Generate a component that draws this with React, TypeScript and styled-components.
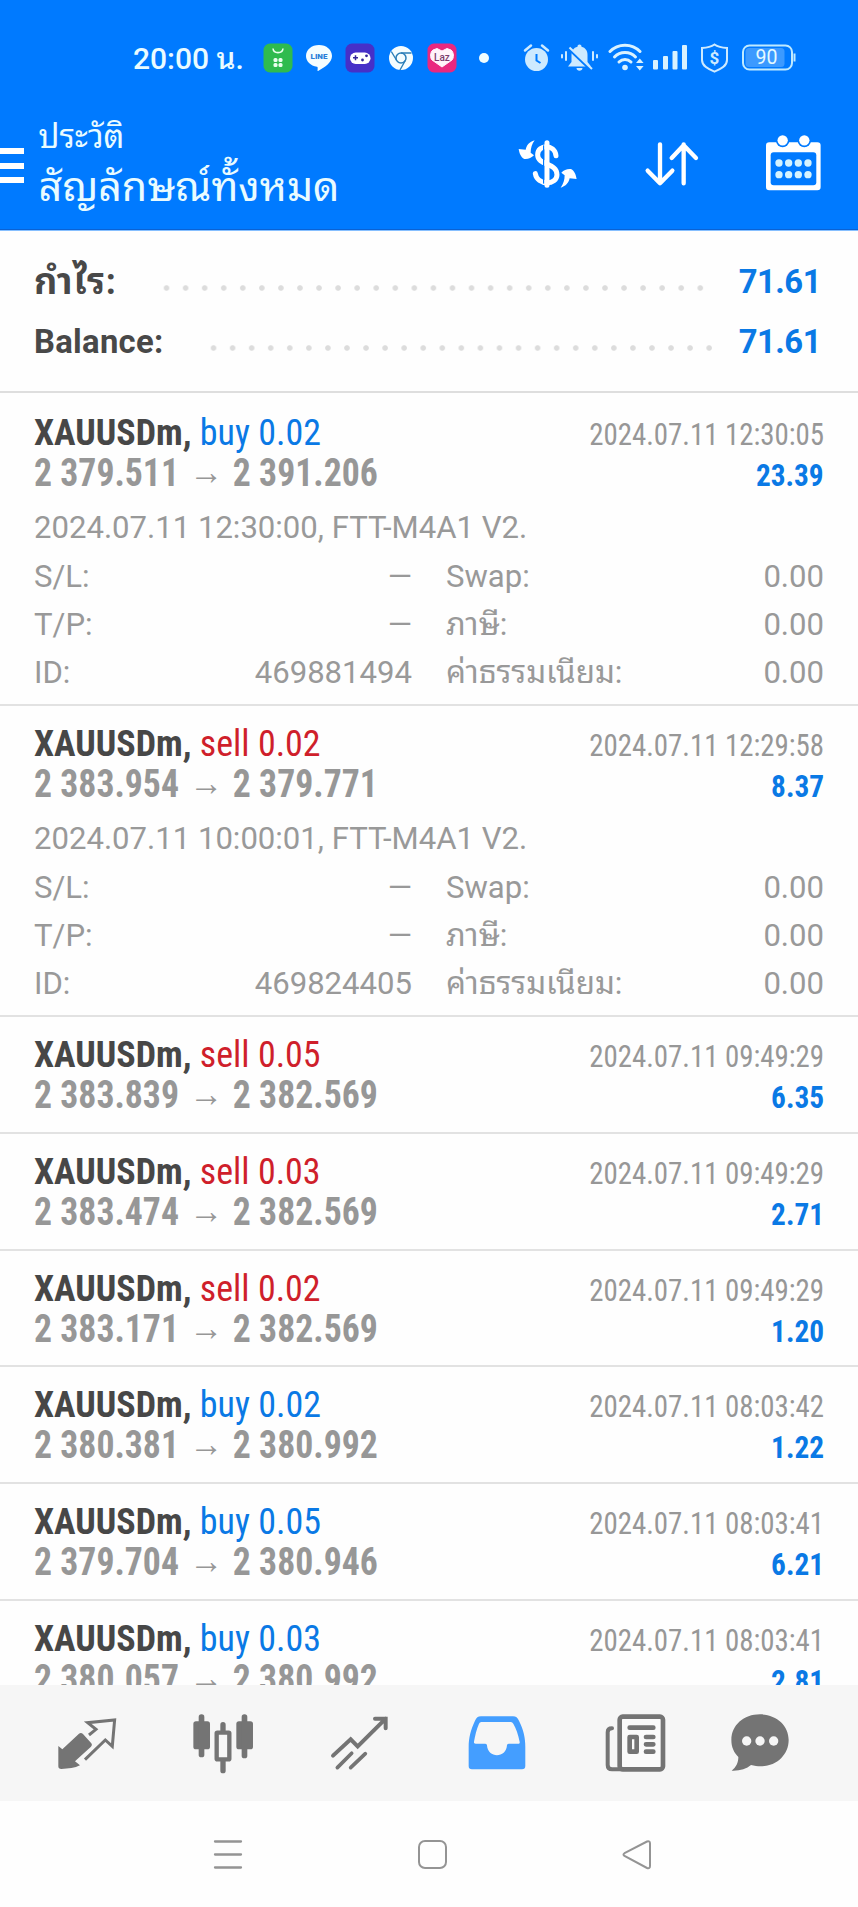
import React from "react";
import styled, { createGlobalStyle } from "styled-components";

const BLUE = "#007aff";
const BUY = "#0a79e5";

const Global = createGlobalStyle`
  body { margin: 0; background: #fefefe; }
  * { box-sizing: border-box; }
  svg { display: block; flex: none; }
`;

const Screen = styled.div`
  width: 858px;
  height: 1907px;
  display: flex;
  flex-direction: column;
  overflow: hidden;
  background: #fefefe;
  color: #979797;
  font-family: Roboto, "Noto Sans Thai Looped", "Noto Looped Thai", Loma, Garuda, Waree, "Noto Sans Thai", sans-serif;
`;

const Header = styled.header`
  height: 230px;
  flex: none;
  background: ${BLUE};
  border-bottom: 1px solid #0a62d4;
  color: #e9fbff;
`;

const StatusBar = styled.div`
  height: 114px;
  padding: 1px 0 0 133px;
  display: flex;
  align-items: center;
`;

const Clock = styled.div`
  width: 129.5px;
  padding-top: 3px;
  font-size: 30px;
  font-weight: 500;
  line-height: 40px;
  white-space: nowrap;
`;

const Icon = styled.svg<{ $left?: number }>`
  margin-left: ${(p) => p.$left ?? 0}px;
`;

const TitleBar = styled.div`
  height: 115px;
  display: flex;
  align-items: flex-start;
`;

const Burger = styled.div`
  width: 24px;
  height: 35px;
  margin-top: 34px;
  border-top: 6px solid #fff;
  border-bottom: 6px solid #fff;
  display: flex;
  align-items: center;
  &::before {
    content: "";
    height: 6px;
    flex: 1;
    background: #fff;
  }
`;

const Titles = styled.div`
  width: 477px;
  padding: 4px 0 0 14.5px;
  white-space: nowrap;
`;

const Small = styled.div`
  font-size: 32.5px;
  line-height: 39px;
`;

const Big = styled.div`
  font-size: 41.2px;
  line-height: 61px;
`;

const Tools = styled.div`
  display: flex;
  align-items: flex-start;
  padding-top: 18px;
`;

const Summary = styled.section`
  height: 163px;
  flex: none;
  padding: 21px 37px 0 34px;
  border-top: 1px solid #86bfff;
  border-bottom: 2px solid #dedede;
  color: #484848;
  font-size: 32.8px;
  font-weight: 700;
  line-height: 60px;
`;

const SummaryRow = styled.div`
  display: flex;
  height: 60px;
  justify-content: space-between;
`;

const SummaryLabel = styled.span<{ $width: number; $thai?: boolean }>`
  width: ${(p) => p.$width}px;
  font-size: ${(p) => (p.$thai ? 36 : 32.8)}px;
  letter-spacing: ${(p) => (p.$thai ? 0.8 : 0.3)}px;
  white-space: nowrap;
`;

const Dots = styled.span<{ $count: number }>`
  width: ${(p) => p.$count * 19.07}px;
  height: 8px;
  margin-top: 32px;
  background: radial-gradient(circle at center, #dcdcdc 2.3px, transparent 3.2px) 0 0 / 19.07px 8px repeat-x;
`;

const Value = styled.span`
  flex: 1;
  text-align: right;
  color: ${BUY};
  letter-spacing: -0.5px;
`;

const List = styled.main`
  flex: 1;
  min-height: 0;
  overflow: hidden;
  padding-top: 2px;
`;

const Card = styled.article<{ $open: boolean }>`
  height: ${(p) => (p.$open ? 311 : 116.8)}px;
  padding: 17px 34px 0;
  border-bottom: 2px solid #e2e2e2;
`;

const Line = styled.div`
  display: flex;
  height: 41px;
  line-height: 40px;
  justify-content: space-between;
  align-items: baseline;
  white-space: pre;
  font-stretch: 75%;
`;

const Title = styled.div`
  font-size: 37.5px;
  transform: scaleX(0.959);
  transform-origin: 0 0;
`;

const Symbol = styled.span`
  font-weight: 700;
  color: #474747;
`;

const Side = styled.span<{ $sell: boolean }>`
  color: ${(p) => (p.$sell ? "#cf1f2b" : BUY)};
`;

const Prices = styled.div`
  display: flex;
  align-items: baseline;
  font-size: 38px;
  font-weight: 700;
  transform: scaleX(0.94);
  transform-origin: 0 0;
`;

const FromPrice = styled.span`
  width: 154.5px;
`;

const Arrow = styled.span`
  position: relative;
  top: -2px;
  width: 36px;
  margin: 0 10px 0 11px;
  font-family: "Liberation Sans", sans-serif;
  font-size: 36px;
  font-weight: 400;
  line-height: 30px;
  text-align: center;
`;

const Time = styled.div`
  font-size: 30.5px;
  transform: scaleX(0.947);
  transform-origin: 100% 0;
`;

const Profit = styled.div`
  font-size: 31px;
  font-weight: 700;
  color: ${BUY};
  transform: scaleX(0.945);
  transform-origin: 100% 0;
`;

const Details = styled.div`
  padding-top: 10.3px;
  font-size: 31.1px;
  font-weight: 400;
  line-height: 48.3px;
  color: #999;
  white-space: nowrap;
`;

const DetailGrid = styled.div`
  display: grid;
  grid-template-columns: 378px 378px;
  column-gap: 34px;
`;

const Pair = styled.div`
  height: 48.3px;
  display: flex;
  justify-content: space-between;
`;

const ThaiLabel = styled.span`
  font-size: 31.4px;
`;

const Nav = styled.nav`
  height: 116px;
  flex: none;
  display: flex;
  padding: 27px 0 0 56px;
  background: #f6f6f6;
  color: #747474;
`;

const SystemBar = styled.footer`
  height: 106px;
  flex: none;
  display: flex;
  padding: 36px 0 0 212px;
`;

type Deal = {
  side: "buy" | "sell";
  lots: string;
  from: string;
  to: string;
  time: string;
  profit: string;
  opened?: string;
  id?: string;
};

const deals: Deal[] = [
  { side: "buy", lots: "0.02", from: "2 379.511", to: "2 391.206", time: "2024.07.11 12:30:05", profit: "23.39", opened: "2024.07.11 12:30:00, FTT-M4A1 V2.", id: "469881494" },
  { side: "sell", lots: "0.02", from: "2 383.954", to: "2 379.771", time: "2024.07.11 12:29:58", profit: "8.37", opened: "2024.07.11 10:00:01, FTT-M4A1 V2.", id: "469824405" },
  { side: "sell", lots: "0.05", from: "2 383.839", to: "2 382.569", time: "2024.07.11 09:49:29", profit: "6.35" },
  { side: "sell", lots: "0.03", from: "2 383.474", to: "2 382.569", time: "2024.07.11 09:49:29", profit: "2.71" },
  { side: "sell", lots: "0.02", from: "2 383.171", to: "2 382.569", time: "2024.07.11 09:49:29", profit: "1.20" },
  { side: "buy", lots: "0.02", from: "2 380.381", to: "2 380.992", time: "2024.07.11 08:03:42", profit: "1.22" },
  { side: "buy", lots: "0.05", from: "2 379.704", to: "2 380.946", time: "2024.07.11 08:03:41", profit: "6.21" },
  { side: "buy", lots: "0.03", from: "2 380.057", to: "2 380.992", time: "2024.07.11 08:03:41", profit: "2.81" },
];

function DealCard({ deal }: { deal: Deal }) {
  return (
    <Card $open={!!deal.id}>
      <Line>
        <Title>
          <Symbol>XAUUSDm, </Symbol>
          <Side $sell={deal.side === "sell"}>{deal.side} {deal.lots}</Side>
        </Title>
        <Time>{deal.time}</Time>
      </Line>
      <Line>
        <Prices>
          <FromPrice>{deal.from}</FromPrice>
          <Arrow>→</Arrow>
          <span>{deal.to}</span>
        </Prices>
        <Profit>{deal.profit}</Profit>
      </Line>
      {deal.id && (
        <Details>
          <div>{deal.opened}</div>
          <DetailGrid>
            <Pair><span>S/L:</span><span>—</span></Pair>
            <Pair><span>Swap:</span><span>0.00</span></Pair>
            <Pair><span>T/P:</span><span>—</span></Pair>
            <Pair><ThaiLabel>ภาษี:</ThaiLabel><span>0.00</span></Pair>
            <Pair><span>ID:</span><span>{deal.id}</span></Pair>
            <Pair><ThaiLabel>ค่าธรรมเนียม:</ThaiLabel><span>0.00</span></Pair>
          </DetailGrid>
        </Details>
      )}
    </Card>
  );
}

function StatusIcons() {
  return (
    <>
      <Icon width="30" height="30" viewBox="0 0 30 30">
        <rect x=".5" y=".5" width="29" height="29" rx="6.5" fill="#2fbb4e" />
        <path d="M10 5.5c.6 5.5 9.400 5.500 10 0" fill="none" stroke="#eaffee" strokeWidth="1.6" />
        <g fill="#eaffee">
          <rect x="10.500" y="15" width="4" height="4" rx="1.500" />
          <rect x="15.500" y="15" width="4" height="4" rx="1.500" />
          <rect x="10.500" y="20" width="4" height="4" rx="1.500" />
          <rect x="15.500" y="20" width="4" height="4" rx="1.500" />
        </g>
      </Icon>
      <Icon $left={12} width="28" height="28" viewBox="0 0 28 28">
        <path d="M14 1C6.500 1 1 5.800 1 12c0 5.500 4.500 9.800 11 10.700.8.200.8 1.200.5 4 .2.500.600.400 1 .1C20 23 27 18.500 27 12 27 5.800 21.500 1 14 1z" fill="#f4fdff" />
        <text x="14" y="15" textAnchor="middle" fontFamily="Roboto" fontWeight="900" fontSize="8" fill="#2a7fd8">LINE</text>
      </Icon>
      <Icon $left={12} width="30" height="30" viewBox="0 0 30 30">
        <rect x=".5" y=".5" width="29" height="29" rx="6.500" fill="#4630c8" />
        <rect x="5" y="9.500" width="20.500" height="11.500" rx="5.700" fill="#fff" />
        <path d="M8 14.800h5M10.500 12.300v5" stroke="#33249a" strokeWidth="1.500" />
        <circle cx="21.500" cy="12.800" r="1.400" fill="#33249a" />
        <circle cx="17.500" cy="17" r="1.400" fill="#33249a" />
      </Icon>
      <Icon $left={13} width="26" height="26" viewBox="0 0 26 26">
        <circle cx="13" cy="13" r="12" fill="#f4fdff" />
        <circle cx="13" cy="13" r="5" fill="#f4fdff" stroke="#2b7fb8" strokeWidth="1.500" />
        <path d="M13 8h10.500M8.700 15.500L3.300 6.500M17.300 15.500L12 25" stroke="#2b7fb8" strokeWidth="1.400" />
      </Icon>
      <Icon $left={13} width="30" height="30" viewBox="0 0 30 30">
        <rect x=".5" y=".5" width="29" height="29" rx="6.500" fill="#e9287f" />
        <path d="M15 24L5 17c-2-2-2-8 1-10l4-1.500 5 2.500 5-2.500L24 7c3 2 3 8 1 10z" fill="#fff3fa" stroke="#fff3fa" />
        <text x="15" y="17.500" textAnchor="middle" fontFamily="Roboto" fontWeight="500" fontSize="10" fill="#7b3c6d">Laz</text>
      </Icon>
      <Icon $left={21} width="12" height="12" viewBox="0 0 12 12"><circle cx="6" cy="6" r="5" fill="#f0fdff" /></Icon>
      <Icon $left={33} width="27" height="29" viewBox="0 0 27 29">
        <circle cx="13.500" cy="16.500" r="11.500" fill="#cdeaff" />
        <path d="M2 7.500l6-5M25 7.500l-6-5" stroke="#cdeaff" strokeWidth="2.500" strokeLinecap="round" />
        <path d="M13.500 11v6.500l4 2.500" fill="none" stroke={BLUE} strokeWidth="2" />
      </Icon>
      <Icon $left={10} width="39" height="29" viewBox="0 0 39 29">
        <path d="M19.500 1.500c1.500 0 2 1 2 2.200 4 1 6 4 6 8.300v7l3.500 4.500H8l3.500-4.500v-7c0-4.300 2-7.300 6-8.300 0-1.200.500-2.200 2-2.200zM16.500 25h6c0 3.500-6 3.500-6 0z" fill="#cdeaff" />
        <path d="M8.500 5.500L31 27" stroke={BLUE} strokeWidth="3" />
        <path d="M9.500 4.500L32 26" stroke="#cdeaff" strokeWidth="2" />
        <path d="M6 9v8M2 12v2.500M33 9v8M37 12v2.500" stroke="#cdeaff" strokeWidth="2" strokeLinecap="round" />
      </Icon>
      <Icon $left={9} width="36" height="29" viewBox="0 0 36 29">
        <g fill="none" stroke="#d9f2ff" strokeWidth="3" strokeLinecap="round">
          <path d="M2 8.500c8-8.500 22-8.500 30 0" />
          <path d="M6.500 14c5.500-6 15.500-6 21 0" />
          <path d="M11 19c3.500-3.500 8.500-3.500 12 0" />
        </g>
        <circle cx="17" cy="24.500" r="2.800" fill="#d9f2ff" />
        <path d="M28 20l3.800-4.500 3.800 4.500zM28 23l3.800 4.500 3.800-4.500z" fill="#d9f2ff" />
      </Icon>
      <Icon $left={8} width="36" height="29" viewBox="0 0 36 29" fill="#d9f2ff">
        <rect x="1" y="17" width="5" height="9.500" rx="1" />
        <rect x="11" y="13" width="5" height="13.500" rx="1" />
        <rect x="20.500" y="8" width="5" height="18.500" rx="1" />
        <rect x="30" y="2" width="5" height="24.500" rx="1" />
      </Icon>
      <Icon $left={12} width="29" height="30" viewBox="0 0 29 30">
        <path d="M14.500 1.500C11 4 6.500 4.800 2 5v12c0 6 6 9 12.500 11.700C21 26 27 23 27 17V5c-4.500-.2-9-1-12.500-3.500z" fill="none" stroke="#cdeaff" strokeWidth="2" />
        <text x="14.500" y="21" textAnchor="middle" fontFamily="Roboto" fontWeight="700" fontSize="17" fill="#cdeaff">$</text>
      </Icon>
      <Icon $left={13} width="54" height="27" viewBox="0 0 54 27">
        <rect x="1" y="1.500" width="49" height="24" rx="6.500" fill="none" stroke="#bfeaff" strokeWidth="2" />
        <rect x="3.500" y="4" width="39" height="19" rx="3.500" fill="#3c9aff" />
        <path d="M52.500 9.500v8" stroke="#bfeaff" strokeWidth="2" />
        <text x="24.500" y="20.300" textAnchor="middle" fontFamily="Roboto" fontSize="19.500" fill="#e6faff">90</text>
      </Icon>
    </>
  );
}

function HeaderTools() {
  return (
    <Tools>
      <Icon $left={14.500} width="63.3" height="63.3" viewBox="260 305 190 190">
        <path d="M380 376C376 340 325 342 325 373c0 34 58 23 58 60 0 32-59 34-65-3" fill="none" stroke="#fff" strokeWidth="15" strokeLinecap="round" />
        <path d="M343 345v115" stroke={BLUE} strokeWidth="4" />
        <path d="M353 337v128" stroke="#fff" strokeWidth="15" strokeLinecap="round" />
        <path d="M316 330c-16 5-24 14-27 28l-21-2c2 12 6 24 17 30 12 1 21-3 29-11l-10-8c0-14 4-26 12-37z" fill="#fff" />
        <path d="M394 472c16-5 24-14 27-28l21 2c-2-12-6-24-17-30-12-1-21 3-29 11l10 8c0 14-4 26-12 37z" fill="#fff" />
      </Icon>
      <Icon $left={63} width="60" height="63.3" viewBox="637 305 180 190" fill="none" stroke="#fff" strokeWidth="13" strokeLinecap="round" strokeLinejoin="round">
        <path d="M691 342v116M654 421l37 38 37-38M762 459V342M726 383l36-38 37 38" />
      </Icon>
      <Icon $left={60} width="63.3" height="63.3" viewBox="1000 305 190 190">
        <rect x="1012" y="336" width="164" height="144" rx="10" fill="#fff" />
        <rect x="1026" y="366" width="137" height="99" rx="9" fill={BLUE} />
        <circle cx="1062" cy="331" r="20" fill={BLUE} />
        <circle cx="1127" cy="331" r="20" fill={BLUE} />
        <circle cx="1062" cy="330" r="15.500" fill="#fff" />
        <circle cx="1127" cy="330" r="15.500" fill="#fff" />
        {[1051, 1080, 1109, 1138].map((x) => (
          <g key={x} fill="#d5f3ff">
            <circle cx={x} cy="398" r="11" />
            <circle cx={x} cy="433" r="11" />
          </g>
        ))}
      </Icon>
    </Tools>
  );
}

function BottomNav() {
  return (
    <Nav>
      <Icon width="63.3" height="63.3" viewBox="170 335 190 190">
        <path d="M177 437l12 10 50-47c4-3 9-2 12 1l25 28c3 4 2 7-1 10l-48 44 15 12c-15 8-35 10-56 11-6 0-9-2-9-8z" fill="currentColor" />
        <path d="M269 404l21-17-25-20 81-8-7 79-21-19-61 59" fill="none" stroke="currentColor" strokeWidth="9" />
      </Icon>
      <Icon $left={71.7} width="65" height="63.3" viewBox="575 335 195 190" fill="currentColor">
        <rect x="582" y="363" width="50" height="84" rx="8" />
        <rect x="598" y="342" width="17" height="129" rx="8" />
        <rect x="711" y="363" width="50" height="84" rx="8" />
        <rect x="727" y="342" width="17" height="132" rx="8" />
        <rect x="652" y="397" width="38" height="80" rx="2" fill="none" stroke="currentColor" strokeWidth="13" />
        <path d="M671 373v18M671 483v28" stroke="currentColor" strokeWidth="16" strokeLinecap="round" />
      </Icon>
      <Icon $left={73.3} width="61.7" height="63.3" viewBox="990 335 185 190" fill="none" stroke="currentColor" strokeWidth="11" strokeLinecap="round">
        <path d="M1002 466l53-49 21 21 84-83M1128 355h32v29" strokeWidth="12" />
        <path d="M1015 502l43-43M1055 502l44-42" />
      </Icon>
      <Icon $left={75} width="63.3" height="63.3" viewBox="110 335 190 190">
        <path fillRule="evenodd" fill="#449eff" d="M155 348h96c9 0 14 4 18 13 14 28 19 51 19 80v56q0 10-10 10H128q-10 0-10-10v-56c0-29 6-52 19-80 4-9 9-13 18-13zM156 365q-5 0-7 5c-8 18-11 34-15 54-1 4 1 6 5 6h29q5 0 5 5c2 40 58 40 60 0q0-5 5-5h28c5 0 6-2 5-6-4-20-11-41-19-54q-3-5-7-5z" />
      </Icon>
      <Icon $left={73.3} width="65" height="63.3" viewBox="520 335 195 190">
        <rect x="570" y="349" width="130" height="158" rx="9" fill="#fafafa" stroke="currentColor" strokeWidth="14" />
        <path d="M547 384c-8 0-13 4-13 12v98c0 8 5 13 13 13h29" fill="none" stroke="currentColor" strokeWidth="12" strokeLinecap="round" />
        <path d="M600 382h71M649 410h22M649 432h22M649 454h22" stroke="currentColor" strokeWidth="14" strokeLinecap="round" />
        <rect x="600" y="410" width="21" height="44" fill="none" stroke="currentColor" strokeWidth="14" strokeLinejoin="round" />
      </Icon>
      <Icon $left={61.7} width="61.7" height="63.3" viewBox="900 335 185 190">
        <path d="M993 342c-49 0-86 33-86 77 0 22 8 38 21 51 0 17-7 31-20 41 24 1 44-5 58-17 63 17 113-23 113-75 0-44-37-77-86-77z" fill="currentColor" />
        <g fill="#f6f6f6"><circle cx="953" cy="422" r="14" /><circle cx="993" cy="422" r="14" /><circle cx="1034" cy="422" r="14" /></g>
      </Icon>
    </Nav>
  );
}

export default function App() {
  return (
    <Screen>
      <Global />
      <Header>
        <StatusBar>
          <Clock>20:00 น.</Clock>
          <StatusIcons />
        </StatusBar>
        <TitleBar>
          <Burger />
          <Titles>
            <Small>ประวัติ</Small>
            <Big>สัญลักษณ์ทั้งหมด</Big>
          </Titles>
          <HeaderTools />
        </TitleBar>
      </Header>
      <Summary>
        <SummaryRow>
          <SummaryLabel $width={123} $thai>กำไร:</SummaryLabel>
          <Dots $count={29} />
          <Value>71.61</Value>
        </SummaryRow>
        <SummaryRow>
          <SummaryLabel $width={170}>Balance:</SummaryLabel>
          <Dots $count={27} />
          <Value>71.61</Value>
        </SummaryRow>
      </Summary>
      <List>
        {deals.map((d, i) => <DealCard key={i} deal={d} />)}
      </List>
      <BottomNav />
      <SystemBar>
        <svg width="32" height="36" viewBox="0 0 32 36" stroke="#949494" strokeWidth="2.300" strokeLinecap="round">
          <path d="M3 4.500h26M3 17.500h26M3 30.500h26" />
        </svg>
        <Icon $left={172} width="32" height="36" viewBox="0 0 32 36">
          <rect x="3" y="4" width="27" height="27" rx="6" fill="none" stroke="#949494" strokeWidth="2" />
        </Icon>
        <Icon $left={174} width="32" height="36" viewBox="0 0 32 36">
          <path d="M2.500 16.200L25 4.500q3-1 3 2v22.500q0 3-3 2L2.500 19q-2-1.400 0-2.800z" fill="none" stroke="#949494" strokeWidth="2" />
        </Icon>
      </SystemBar>
    </Screen>
  );
}
